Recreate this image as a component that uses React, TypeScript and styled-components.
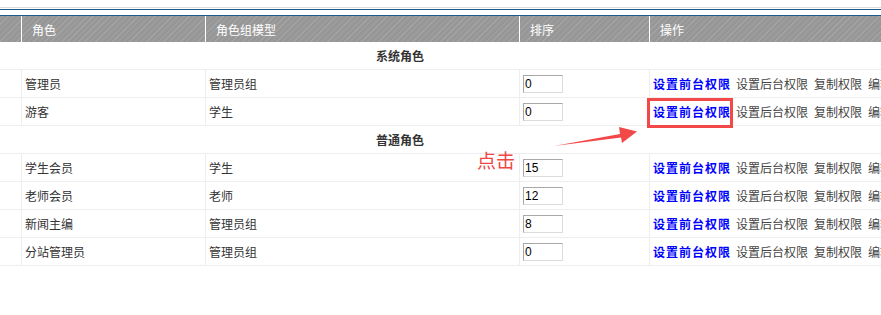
import React from 'react';
import styled, { createGlobalStyle } from 'styled-components';

const Global = createGlobalStyle`
  html, body { margin: 0; padding: 0; background: #fff; overflow: hidden; }
  body {
    font-family: "Noto Sans CJK SC", "Liberation Sans", sans-serif;
    font-size: 12px;
    color: #333;
  }
`;

const Page = styled.div`
  position: relative;
  width: 881px;
  height: 315px;
  overflow: hidden;
  padding-top: 7px;
  box-sizing: border-box;
`;

const TopRule = styled.div`
  width: 1000px;
  border-top: 1px solid #dcdcdc;
`;

const Frame = styled.div`
  width: 1000px;
  margin-top: 1px;
  border-top: 1px solid #1e5b8d;
  padding-top: 5px;
`;

const Table = styled.div`
  width: 1000px;
  border-top: 1px solid #1e5b8d;
`;

const cols = '21px 184px 314px 130px 1fr';

const HeadRow = styled.div`
  display: grid;
  grid-template-columns: ${cols};
  height: 26px;
  background-color: #979797;
  background-image: repeating-linear-gradient(
    -45deg,
    #979797 0px,
    #979797 3px,
    #a3a3a3 3px,
    #a3a3a3 4px
  );
`;

const HeadCell = styled.div<{ $first?: boolean }>`
  display: flex;
  align-items: center;
  padding: 0 10px;
  color: #fff;
  font-size: 12px;
  border-left: ${(p) => (p.$first ? 'none' : '1px solid #fff')};
  white-space: nowrap;
`;

const Row = styled.div`
  display: grid;
  grid-template-columns: ${cols};
  height: 28px;
  box-sizing: border-box;
  border-bottom: 1px solid #eeeeee;
`;

const Cell = styled.div<{ $first?: boolean }>`
  display: flex;
  align-items: center;
  padding: 0 3px;
  border-left: ${(p) => (p.$first ? 'none' : '1px solid #eeeeee')};
  white-space: nowrap;
  overflow: visible;
`;

const GroupRow = styled.div`
  height: 28px;
  box-sizing: border-box;
  border-bottom: 1px solid #eeeeee;
  display: flex;
  align-items: center;
  justify-content: center;
  padding-right: 200px;
  font-weight: bold;
  color: #333;
`;

const OrderInput = styled.input`
  width: 40px;
  height: 18px;
  box-sizing: border-box;
  margin: 0;
  padding: 0 1px;
  border: 1px solid #dcdcdc;
  border-top-color: #a8a8a8;
  border-left-color: #a8a8a8;
  font-family: "Liberation Sans", sans-serif;
  font-size: 12px;
  color: #000;
  background: #fff;
  outline: none;
`;

const Ops = styled.div`
  display: flex;
  align-items: center;
  gap: 6px;
`;

const OpLink = styled.a<{ $primary?: boolean }>`
  text-decoration: none;
  cursor: pointer;
  color: ${(p) => (p.$primary ? '#0000ff' : '#444')};
  font-weight: ${(p) => (p.$primary ? 'bold' : 'normal')};
  letter-spacing: ${(p) => (p.$primary ? '1px' : '0')};
  margin-right: ${(p) => (p.$primary ? '-1px' : '0')};
`;

const HighlightBox = styled.div`
  position: absolute;
  left: 647px;
  top: 98px;
  width: 86px;
  height: 30px;
  box-sizing: border-box;
  border: 3px solid #f24848;
  pointer-events: none;
`;

const ArrowSvg = styled.svg`
  position: absolute;
  left: 550px;
  top: 122px;
  pointer-events: none;
`;

const ClickLabel = styled.span`
  position: absolute;
  left: 477px;
  top: 149px;
  font-size: 19px;
  line-height: 22px;
  color: #f04545;
  font-family: "Noto Sans CJK SC", sans-serif;
  font-weight: 400;
`;

type Role = { name: string; model: string; order: string };

const systemRoles: Role[] = [
  { name: '管理员', model: '管理员组', order: '0' },
  { name: '游客', model: '学生', order: '0' },
];

const normalRoles: Role[] = [
  { name: '学生会员', model: '学生', order: '15' },
  { name: '老师会员', model: '老师', order: '12' },
  { name: '新闻主编', model: '管理员组', order: '8' },
  { name: '分站管理员', model: '管理员组', order: '0' },
];

const RoleRow: React.FC<{ role: Role }> = ({ role }) => (
  <Row>
    <Cell $first />
    <Cell>{role.name}</Cell>
    <Cell>{role.model}</Cell>
    <Cell>
      <OrderInput defaultValue={role.order} />
    </Cell>
    <Cell>
      <Ops>
        <OpLink $primary>设置前台权限</OpLink>
        <OpLink>设置后台权限</OpLink>
        <OpLink>复制权限</OpLink>
        <OpLink>编辑</OpLink>
      </Ops>
    </Cell>
  </Row>
);

export default function App() {
  return (
    <>
      <Global />
      <Page>
        <TopRule />
        <Frame>
          <Table>
            <HeadRow>
              <HeadCell $first />
              <HeadCell>角色</HeadCell>
              <HeadCell>角色组模型</HeadCell>
              <HeadCell>排序</HeadCell>
              <HeadCell>操作</HeadCell>
            </HeadRow>
            <GroupRow>系统角色</GroupRow>
            {systemRoles.map((r) => (
              <RoleRow key={r.name} role={r} />
            ))}
            <GroupRow>普通角色</GroupRow>
            {normalRoles.map((r) => (
              <RoleRow key={r.name} role={r} />
            ))}
          </Table>
        </Frame>
        <HighlightBox />
        <ArrowSvg width="92" height="30" viewBox="0 0 92 30">
          <polygon
            points="4,24 70,12 69,5 87,9.5 72,21 71,15.5"
            fill="#f24848"
          />
        </ArrowSvg>
        <ClickLabel>点击</ClickLabel>
      </Page>
    </>
  );
}
